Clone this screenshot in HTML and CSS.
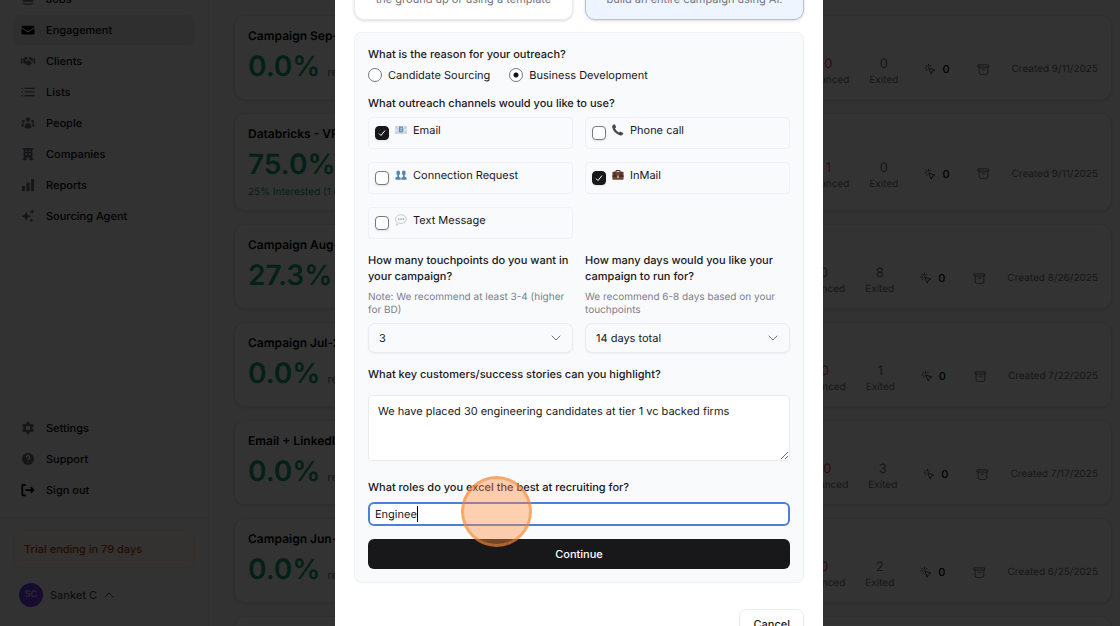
FILE: index.html
```html
<!DOCTYPE html>
<html lang="en">
<head>
    <meta charset="UTF-8">
    <title>Engagement - New Campaign</title>
    <meta name="viewport" content="width=device-width, initial-scale=1.0">
    <link rel="stylesheet" href="styles.css">
</head>
<body>
    <!-- shared icons -->
    <svg class="sprite" aria-hidden="true">
        <symbol id="click" viewBox="0 0 24 24">
            <path d="M9 2.500v3M3.800 4.600l2.100 2.100M2 10h3M4.400 15.200l1.800-1.800M14.200 4.600l-2.100 2.100M10 10l12 4.500-5.200 2-2 5.200z" fill="none" stroke="currentColor" stroke-width="2" stroke-linecap="round" stroke-linejoin="round"/>
        </symbol>
        <symbol id="archive" viewBox="0 0 24 24">
            <path d="M2.500 3.500h19v4h-19zM4 7.500v11a2.500 2.500 0 0 0 2.500 2.500h11a2.500 2.500 0 0 0 2.500-2.500v-11M9.500 11.500h5" fill="none" stroke="currentColor" stroke-width="1.800" stroke-linecap="round" stroke-linejoin="round"/>
        </symbol>
        <symbol id="chevron" viewBox="0 0 10 10">
            <path d="M1 3l4 4 4-4" fill="none" stroke="currentColor" stroke-linecap="round" stroke-linejoin="round"/>
        </symbol>
    </svg>

    <div class="app">
        <aside class="sidebar">
            <nav class="nav nav-main">
                <a class="nav-item" href="#">
                    <svg viewBox="0 0 16 16"><path d="M2 3h12v3H2zM2 7.500c3 2 9 2 12 0V11H2zM2 12c3 1.500 9 1.500 12 0v1.500c-2 1.500-10 1.500-12 0z"/></svg>
                    Jobs
                </a>
                <a class="nav-item active" href="#">
                    <svg viewBox="0 0 16 16"><path d="M2 3h12a1.500 1.500 0 0 1 1.300 1.500L8 9.300.7 4.500A1.500 1.500 0 0 1 2 3zM.5 6L8 10.800 15.500 6v5.500A1.500 1.500 0 0 1 14 13H2a1.500 1.500 0 0 1-1.500-1.500z"/></svg>
                    Engagement
                </a>
                <a class="nav-item" href="#">
                    <svg viewBox="0 0 20 16"><path d="M1 4.500h2v7H1zM17 4.500h2v7h-2zM4 4.500l3-1.500 3 1-3 3c1 1.500 2.500.8 3.500-.3L15.500 10.500 12 13.200c-1.500 1-3 .5-4-.5L4 10zM11 3.500L13 3l3 1.500v5l-5-4.500-2.500 1.600z"/></svg>
                    Clients
                </a>
                <a class="nav-item" href="#">
                    <svg viewBox="0 0 16 16"><path d="M.5 3h1.600v1.600H.5zM.5 7.200h1.600v1.600H.5zM.5 11.400h1.600V13H.5zM4 3h11.500v1.500H4zM4 7.200h11.500v1.500H4zM4 11.500h11.500V13H4z"/></svg>
                    Lists
                </a>
                <a class="nav-item" href="#">
                    <svg viewBox="0 0 16 16"><circle cx="8" cy="4" r="2.500"/><circle cx="2.700" cy="6" r="1.600"/><circle cx="13.300" cy="6" r="1.600"/><path d="M4 13c0-6.500 8-6.500 8 0-2 1.800-6 1.800-8 0zM3.700 8.300C1.500 8 .3 9.800.4 12l2.400.7c0-1.700.2-3.200.9-4.400zM12.300 8.300c2.200-.3 3.400 1.500 3.300 3.700l-2.400.7c0-1.700-.2-3.200-.9-4.400z"/></svg>
                    People
                </a>
                <a class="nav-item" href="#">
                    <svg viewBox="0 0 16 16"><path fill-rule="evenodd" d="M2 1h12v1.200h-.8v11.600h.8V15H9.500v-3h-3v3H2v-1.200h.8V2.200H2zM5 4v1.500h2V4zM9 4v1.500h2V4zM5 7.500V9h2V7.500zM9 7.500V9h2V7.500z"/></svg>
                    Companies
                </a>
                <a class="nav-item" href="#">
                    <svg viewBox="0 0 16 16"><rect x="1" y="9" width="3.500" height="6" rx="1"/><rect x="6.300" y="5" width="3.500" height="10" rx="1"/><rect x="11.500" y="1" width="3.500" height="14" rx="1"/></svg>
                    Reports
                </a>
                <a class="nav-item" href="#">
                    <svg viewBox="0 0 16 16"><path d="M6 2.500l1.500 4L11.500 8.200 7.500 9.900 6 14 4.500 9.900.5 8.200l4-1.700zM12.700 0l.9 2.200 2.200.9-2.200.9-.9 2.200-.9-2.200-2.200-.9 2.200-.9zM11.800 10.200l.8 2 2 .8-2 .8-.8 2-.8-2-2-.8 2-.8z"/></svg>
                    Sourcing Agent
                </a>
            </nav>

            <nav class="nav nav-bottom">
                <a class="nav-item" href="#">
                    <svg viewBox="0 0 16 16"><path fill-rule="evenodd" d="M6.500.8h3l.5 2 1.300.8 2-.6 1.500 2.600L13.300 7v2l1.500 1.400-1.500 2.600-2-.6-1.300.8-.5 2h-3l-.5-2-1.300-.8-2 .6-1.500-2.600L2.700 9V7L1.200 5.600 2.700 3l2 .6L6 2.800zM8 5.400a2.600 2.600 0 1 0 0 5.200 2.600 2.600 0 0 0 0-5.200z"/></svg>
                    Settings
                </a>
                <a class="nav-item" href="#">
                    <svg viewBox="0 0 16 16"><circle cx="8" cy="8" r="7"/><path class="line-light" d="M6 6.200c0-2.600 4-2.600 4 0C10 7.600 8 7.600 8 9.200M8 11.200v.6"/></svg>
                    Support
                </a>
                <a class="nav-item" href="#">
                    <svg viewBox="0 0 16 16"><path class="line" d="M5.500 2h-3q-1 0-1 1v10q0 1 1 1h3M5 8h9M11 4.800L14.200 8 11 11.200"/></svg>
                    Sign out
                </a>
            </nav>

            <div class="sidebar-footer">
                <div class="trial">Trial ending in 79 days</div>
                <button class="user" type="button">
                    <span class="avatar">SC</span>
                    Sanket C
                    <svg class="flip" viewBox="0 0 10 10"><use href="#chevron"/></svg>
                </button>
            </div>
        </aside>

        <main class="campaigns">
            <article class="campaign">
                <h2>Campaign Sep-11</h2>
                <div class="campaign-row">
                    <div class="rate"><p><b>0.0%</b> replied</p></div>
                    <dl class="stat bounced"><dd>0</dd><dt>Bounced</dt></dl>
                    <dl class="stat"><dd>0</dd><dt>Exited</dt></dl>
                    <span class="clicks"><svg><use href="#click"/></svg>0</span>
                    <svg class="archive"><use href="#archive"/></svg>
                    <time>Created 9/11/2025</time>
                </div>
            </article>
            <article class="campaign">
                <h2>Databricks - VP</h2>
                <div class="campaign-row">
                    <div class="rate"><p><b>75.0%</b> replied</p><p class="interested">25% Interested (1 of 4)</p></div>
                    <dl class="stat bounced"><dd>1</dd><dt>Bounced</dt></dl>
                    <dl class="stat"><dd>0</dd><dt>Exited</dt></dl>
                    <span class="clicks"><svg><use href="#click"/></svg>0</span>
                    <svg class="archive"><use href="#archive"/></svg>
                    <time>Created 9/11/2025</time>
                </div>
            </article>
            <article class="campaign">
                <h2>Campaign Aug-26</h2>
                <div class="campaign-row">
                    <div class="rate"><p><b>27.3%</b> replied</p></div>
                    <dl class="stat bounced"><dd>0</dd><dt>Bounced</dt></dl>
                    <dl class="stat"><dd>8</dd><dt>Exited</dt></dl>
                    <span class="clicks"><svg><use href="#click"/></svg>0</span>
                    <svg class="archive"><use href="#archive"/></svg>
                    <time>Created 8/26/2025</time>
                </div>
            </article>
            <article class="campaign">
                <h2>Campaign Jul-22</h2>
                <div class="campaign-row">
                    <div class="rate"><p><b>0.0%</b> replied</p></div>
                    <dl class="stat bounced"><dd>0</dd><dt>Bounced</dt></dl>
                    <dl class="stat"><dd>1</dd><dt>Exited</dt></dl>
                    <span class="clicks"><svg><use href="#click"/></svg>0</span>
                    <svg class="archive"><use href="#archive"/></svg>
                    <time>Created 7/22/2025</time>
                </div>
            </article>
            <article class="campaign">
                <h2>Email + LinkedIn</h2>
                <div class="campaign-row">
                    <div class="rate"><p><b>0.0%</b> replied</p></div>
                    <dl class="stat bounced"><dd>0</dd><dt>Bounced</dt></dl>
                    <dl class="stat"><dd>3</dd><dt>Exited</dt></dl>
                    <span class="clicks"><svg><use href="#click"/></svg>0</span>
                    <svg class="archive"><use href="#archive"/></svg>
                    <time>Created 7/17/2025</time>
                </div>
            </article>
            <article class="campaign">
                <h2>Campaign Jun-25</h2>
                <div class="campaign-row">
                    <div class="rate"><p><b>0.0%</b> replied</p></div>
                    <dl class="stat bounced"><dd>0</dd><dt>Bounced</dt></dl>
                    <dl class="stat"><dd>2</dd><dt>Exited</dt></dl>
                    <span class="clicks"><svg><use href="#click"/></svg>0</span>
                    <svg class="archive"><use href="#archive"/></svg>
                    <time>Created 6/25/2025</time>
                </div>
            </article>
            <article class="campaign"></article>
        </main>
    </div>

    <div class="overlay">
        <div class="modal" role="dialog" aria-modal="true">
            <div class="options">
                <button class="option" type="button">the ground up or using a template</button>
                <button class="option selected" type="button">build an entire campaign using AI.</button>
            </div>

            <form class="panel">
                <fieldset>
                    <legend>What is the reason for your outreach?</legend>
                    <div class="radios">
                        <label><input type="radio" name="reason">Candidate Sourcing</label>
                        <label><input type="radio" name="reason" checked>Business Development</label>
                    </div>
                </fieldset>

                <fieldset class="channels-group">
                    <legend>What outreach channels would you like to use?</legend>
                    <div class="channels">
                        <label class="channel">
                            <input type="checkbox" checked>
                            <svg viewBox="0 0 12 12"><path fill="#dce1e6" stroke="#bcc3ca" stroke-width=".5" d="M.3 2.500h11.400v7H.3z"/><path fill="none" stroke="#a9b4bf" stroke-width=".6" d="M.5 9.300L4.500 6M11.500 9.300L7.500 6M.5 2.700L6 7l5.500-4.300"/><path fill="#5f91bd" d="M4 2.500h4v6H4z"/><path fill="#dcebf7" d="M5.500 3.800h1.500v1H5.500zM5.500 5.600h1v1.600h-1z"/></svg>
                            Email
                        </label>
                        <label class="channel">
                            <input type="checkbox">
                            <svg viewBox="0 0 12 12"><path fill="#454b4d" d="M.5 1.500L2 .3q.7-.3 1 .4l1 2q.2.700-.3 1l-.8.6q1.200 2.700 4.200 4.200l.7-.8q.500-.4 1 0l2.200 1.200q.6.400.2 1l-1 1.200q-.6.700-2 .4Q1.500 9.300.2 3.300q-.2-1.200.3-1.800z"/></svg>
                            Phone call
                        </label>
                        <label class="channel">
                            <input type="checkbox">
                            <svg viewBox="0 0 12 12"><g fill="#5485ad"><ellipse cx="3.200" cy="4" rx="1.900" ry="2.400"/><ellipse cx="8.800" cy="4" rx="1.900" ry="2.400"/><path d="M2.400 5H4v2.800l1.700 1v2H.4V9q.1-.8 2-1.400zM8 5h1.600v2.600q1.900.6 2 1.400v1.800H6.300v-2l1.700-1z"/></g></svg>
                            Connection Request
                        </label>
                        <label class="channel">
                            <input type="checkbox" checked>
                            <svg viewBox="0 0 12 12"><path fill="none" stroke="#4b3027" d="M4 3V1.500h4V3"/><rect x=".4" y="2.800" width="11.200" height="8" rx=".8" fill="#6f4536"/><path fill="#3d2923" d="M.4 6.500h11.200v1.200H.4zM2.200 2.800h1.200v4H2.200zM8.600 2.800h1.200v4H8.600z"/><path fill="#e3c7ae" d="M5.300 6.500h1.400v2.500H5.300z"/></svg>
                            InMail
                        </label>
                        <label class="channel">
                            <input type="checkbox">
                            <svg viewBox="0 0 12 12"><path fill="#f7f8f9" stroke="#b4b8bc" stroke-width=".7" d="M6 .7c7 .2 7 8.600 0 8.800q-1 .1-1.800-.2Q3 11 1.300 11.200 2.300 10 2 8.300C-.9 6 .3.900 6 .7z"/><path fill="#777c82" d="M3.200 4.600h1.100v1.100H3.200zM5.500 4.600h1.100v1.100H5.500zM7.800 4.600h1.100v1.100H7.800z"/></svg>
                            Text Message
                        </label>
                    </div>
                </fieldset>

                <div class="columns">
                    <div class="field">
                        <label for="touchpoints">How many touchpoints do you want in your campaign?</label>
                        <p class="hint">Note: We recommend at least 3-4 (higher for BD)</p>
                        <div class="select">
                            <select id="touchpoints"><option>3</option></select>
                            <svg><use href="#chevron"/></svg>
                        </div>
                    </div>
                    <div class="field">
                        <label for="days">How many days would you like your campaign to run for?</label>
                        <p class="hint">We recommend 6-8 days based on your touchpoints</p>
                        <div class="select">
                            <select id="days"><option>14 days total</option></select>
                            <svg><use href="#chevron"/></svg>
                        </div>
                    </div>
                </div>

                <div class="field stories">
                    <label for="stories">What key customers/success stories can you highlight?</label>
                    <textarea id="stories">We have placed 30 engineering candidates at tier 1 vc backed firms</textarea>
                </div>

                <div class="field roles">
                    <label for="roles">What roles do you excel the best at recruiting for?</label>
                    <div class="roles-box"><input id="roles" type="text" value="Enginee"></div>
                </div>

                <button class="continue" type="submit">Continue</button>
            </form>

            <div class="actions">
                <button class="cancel" type="button">Cancel</button>
            </div>
            <span class="click-marker"></span>
        </div>
    </div>
</body>
</html>
```

FILE: styles.css
```css
:root {
    --text: #18181b;
    --muted: #7b808a;
    --border: #e9ebee;
    --panel: #f9fafc;
    --green: #10a374;
    --blue: #4a7fdc;
}
* {
    box-sizing: border-box;
    margin: 0;
    padding: 0;
}
body {
    font-family: Inter, "Liberation Sans", sans-serif;
    font-size: 11px;
    line-height: 16px;
    text-rendering: geometricPrecision;
    color: var(--text);
    background: #fafafa;
    height: 100vh;
    overflow: hidden;
}
button, input, select, textarea {
    font: inherit;
    color: inherit;
    text-rendering: inherit;
}
.sprite {
    display: none;
}

/* sidebar */
.app {
    display: flex;
    height: 100vh;
}
.sidebar {
    width: 209px;
    flex: none;
    display: flex;
    flex-direction: column;
    background: #fbfbfb;
    border-right: 1px solid #e8e8ea;
}
.nav {
    display: flex;
    flex-direction: column;
    gap: 1px;
    padding: 0 13px;
}
.nav-main {
    margin-top: -16px;
}
.nav-bottom {
    margin-top: auto;
    padding-bottom: 12px;
}
.nav-item {
    display: flex;
    align-items: center;
    gap: 10px;
    height: 30px;
    padding: 0 7px;
    border-radius: 6px;
    font-weight: 500;
    color: #09090b;
    text-decoration: none;
}
.nav-item svg {
    width: 16px;
    height: 14px;
    fill: #71717a;
}
.nav-item.active {
    background: #e9e9eb;
}
.nav-item.active svg {
    fill: #000;
}
.nav-item .line, .nav-item .line-light {
    fill: none;
    stroke: #000;
    stroke-width: 2;
}
.nav-item .line-light {
    stroke: #fff;
    stroke-width: 1.5;
}
.sidebar-footer {
    border-top: 1px solid #e8e8ea;
    padding: 12px 13px 19px;
}
.trial {
    padding: 10px;
    border: 1px solid #f8e8d8;
    border-radius: 8px;
    background: #fff7ed;
    color: #c2410c;
    font-weight: 500;
}
.user {
    display: flex;
    align-items: center;
    gap: 7px;
    margin-top: 15px;
    padding: 0 6px;
    border: none;
    background: none;
    color: #52525b;
    font-weight: 500;
}
.user svg {
    width: 10px;
    height: 10px;
}
.flip {
    transform: rotate(180deg);
}
.avatar {
    width: 24px;
    height: 24px;
    border-radius: 50%;
    background: linear-gradient(135deg, #4f46f5, #9333ea);
    color: #ddd;
    font-size: 9px;
    line-height: 24px;
}

/* campaign list */
.campaigns {
    flex: 1;
    display: flex;
    flex-direction: column;
    gap: 13px;
    padding: 15px 8px 0 25px;
    overflow: hidden;
}
.campaign {
    flex: none;
    min-height: 85px;
    padding: 11px 13px 8px;
    border: 1px solid #e8e8ea;
    border-radius: 11px;
    background: #fff;
    box-shadow: 0 1px 3px rgba(0, 0, 0, 0.12);
}
.campaign h2 {
    margin-bottom: 2px;
    font-size: 12px;
    line-height: 18px;
    font-weight: 600;
    color: #000;
}
.campaign-row {
    display: flex;
    align-items: center;
    min-height: 44px;
    color: #71717a;
}
.rate {
    flex: 1;
    align-self: flex-start;
}
.rate b {
    margin-right: 4px;
    color: var(--green);
    font-size: 28px;
    line-height: 38px;
    font-weight: 600;
}
.rate .interested {
    margin: 3px 0;
    color: var(--green);
    font-size: 10px;
    line-height: 13px;
}
.stat {
    display: flex;
    flex-direction: column;
    margin-right: 20px;
    padding-top: 5px;
    font-size: 10px;
    text-align: center;
}
.stat dd {
    font-size: 13px;
}
.stat.bounced dd {
    color: #ef4444;
}
.clicks {
    display: flex;
    align-items: center;
    gap: 6px;
    margin: 0 28px 0 6px;
    color: #000;
    font-weight: 500;
}
.clicks svg {
    width: 12px;
    height: 12px;
    color: #52525b;
}
.archive {
    width: 13px;
    height: 13px;
    margin-right: 21px;
}
time {
    font-size: 10px;
}

/* modal */
.overlay {
    position: fixed;
    inset: 0;
    display: flex;
    justify-content: center;
    padding-left: 38px;
    background: rgba(0, 0, 0, 0.8);
}
.modal {
    position: relative;
    width: 488px;
    padding: 0 19px;
    background: #fff;
    overflow: hidden;
}
.options, .columns, .channels {
    display: grid;
    grid-template-columns: 1fr 1fr;
    gap: 12px;
}
.options {
    margin: -40px 0 12px;
}
.option {
    height: 60px;
    padding: 18px 0 0;
    border: 1px solid var(--border);
    border-radius: 10px;
    background: #fff;
    box-shadow: 0 1px 3px rgba(0, 0, 0, 0.15);
    color: #71757e;
}
.option.selected {
    border-color: #a9c3ec;
    background: #eff5ff;
}
.panel {
    padding: 13px;
    border: 1px solid #eff1f4;
    border-radius: 7px;
    background: var(--panel);
}
fieldset {
    border: none;
}
legend, .field > label {
    display: block;
    font-weight: 500;
}
.radios {
    display: flex;
    gap: 19px;
    padding-top: 5px;
}
.radios label {
    display: flex;
    align-items: center;
    gap: 6px;
}
.radios input, .channel input {
    appearance: none;
    width: 14px;
    height: 14px;
    border: 1px solid #77797d;
    border-radius: 50%;
    background: #fff;
}
.radios input:checked {
    background: radial-gradient(circle, #111 2px, #fff 3px);
}
.channels-group {
    margin-top: 12px;
}
.channels {
    row-gap: 13px;
    padding-top: 6px;
}
.channel {
    display: flex;
    align-items: flex-start;
    height: 32px;
    padding: 4px 6px;
    border: 1px solid #eff1f4;
    border-radius: 4px;
}
.channel input {
    margin: 4px 6px 0 0;
    border-radius: 4px;
    box-shadow: 0 1px 2px rgba(0, 0, 0, 0.1);
}
.channel input:checked {
    border-color: var(--text);
    background: var(--text) url("data:image/svg+xml,%3Csvg xmlns='http://www.w3.org/2000/svg' viewBox='0 0 12 12'%3E%3Cpath d='M3 6.500l2 2 4-5' fill='none' stroke='white'/%3E%3C/svg%3E");
}
.channel svg {
    width: 12px;
    height: 12px;
    margin: 2px 6px 0 0;
}
.columns {
    margin-top: 13px;
}
.hint {
    margin: 7px 0 6px;
    color: var(--muted);
    font-size: 10px;
    line-height: 13px;
}
.select {
    display: grid;
    align-items: center;
}
.select select, .select svg {
    grid-area: 1 / 1;
}
.select select {
    appearance: none;
    height: 30px;
    padding: 0 10px;
    border: 1px solid var(--border);
    border-radius: 7px;
    background: var(--panel);
    box-shadow: 0 1px 2px rgba(0, 0, 0, 0.05);
}
.select svg {
    justify-self: end;
    width: 10px;
    height: 10px;
    margin-right: 12px;
    color: #6c7077;
    pointer-events: none;
}
.stories {
    margin-top: 13px;
}
textarea {
    display: block;
    width: 100%;
    height: 66px;
    margin-top: 13px;
    padding: 7px 9px;
    border: 1px solid var(--border);
    border-radius: 4px;
    background: #fff;
    resize: vertical;
}
.roles {
    margin-top: 18px;
}
.roles-box {
    margin-top: 7px;
    padding: 2px 5px;
    border: 2px solid var(--blue);
    border-radius: 6px;
    background: #fff;
}
.roles-box input {
    field-sizing: content;
    display: block;
    height: 16px;
    border: none;
    border-right: 1px solid #000;
    background: none;
    outline: none;
}
.continue {
    display: block;
    width: 100%;
    height: 30px;
    margin-top: 13px;
    border: none;
    border-radius: 6px;
    background: var(--text);
    color: #fff;
    font-weight: 500;
}
.actions {
    display: flex;
    justify-content: flex-end;
    margin-top: 26px;
}
.cancel {
    height: 30px;
    padding: 0 13px;
    border: 1px solid var(--border);
    border-radius: 7px;
    background: #fff;
    font-weight: 500;
}
.click-marker {
    position: absolute;
    left: 126px;
    top: 476px;
    width: 71px;
    height: 71px;
    border: 3px solid rgba(240, 130, 40, 0.5);
    border-radius: 50%;
    background: rgba(255, 137, 57, 0.4);
    pointer-events: none;
}
```
